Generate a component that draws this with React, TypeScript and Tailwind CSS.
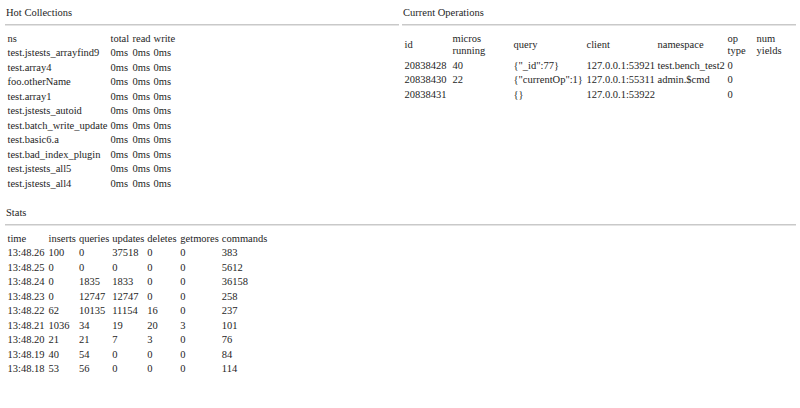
import React from "react";

const cell = "px-[1.5px] py-[1px] text-left font-normal align-middle whitespace-nowrap";
const cellWrap = "px-[1.5px] py-[1px] text-left font-normal align-middle";

function Title({ children }: { children: React.ReactNode }) {
  return (
    <div>
      <div className="leading-[12.5px] pl-[1px]">{children}</div>
      <div className="mt-[4.5px] h-[2px] border-t border-t-[#c9c9c9] border-b border-b-[#e4e4e4]" />
    </div>
  );
}

const hot = [
  "test.jstests_arrayfind9",
  "test.array4",
  "foo.otherName",
  "test.array1",
  "test.jstests_autoid",
  "test.batch_write_update",
  "test.basic6.a",
  "test.bad_index_plugin",
  "test.jstests_all5",
  "test.jstests_all4",
];

const ops = [
  ["20838428", "40", '{"_id":77}', "127.0.0.1:53921", "test.bench_test2", "0", ""],
  ["20838430", "22", '{"currentOp":1}', "127.0.0.1:55311", "admin.$cmd", "0", ""],
  ["20838431", "", "{}", "127.0.0.1:53922", "", "0", ""],
];

const stats = [
  ["13:48.26", "100", "0", "37518", "0", "0", "383"],
  ["13:48.25", "0", "0", "0", "0", "0", "5612"],
  ["13:48.24", "0", "1835", "1833", "0", "0", "36158"],
  ["13:48.23", "0", "12747", "12747", "0", "0", "258"],
  ["13:48.22", "62", "10135", "11154", "16", "0", "237"],
  ["13:48.21", "1036", "34", "19", "20", "3", "101"],
  ["13:48.20", "21", "21", "7", "3", "0", "76"],
  ["13:48.19", "40", "54", "0", "0", "0", "84"],
  ["13:48.18", "53", "56", "0", "0", "0", "114"],
];

export default function App() {
  return (
    <div
      className="w-[800px] h-[408px] bg-white text-[#1e1e1e] text-[10.5px] leading-[12.5px] pl-[5px] pr-[4px] pt-[7px]"
      style={{ fontFamily: '"Liberation Serif", "Times New Roman", serif' }}
    >
      <div className="grid grid-cols-2 gap-x-[3px]">
        <div>
          <Title>Hot Collections</Title>
          <table className="mt-[5.5px] ml-[1px] border-collapse">
            <thead>
              <tr>
                <th className={`${cell} w-[103px]`}>ns</th>
                <th className={`${cell} w-[22px]`}>total</th>
                <th className={`${cell} w-[21px]`}>read</th>
                <th className={cell}>write</th>
              </tr>
            </thead>
            <tbody>
              {hot.map((n) => (
                <tr key={n}>
                  <td className={cell}>{n}</td>
                  <td className={cell}>0ms</td>
                  <td className={cell}>0ms</td>
                  <td className={cell}>0ms</td>
                </tr>
              ))}
            </tbody>
          </table>
        </div>
        <div>
          <Title>Current Operations</Title>
          <table className="mt-[5.5px] ml-[1px] border-collapse table-fixed w-[393px]">
            <colgroup>
              <col className="w-[48px]" />
              <col className="w-[61px]" />
              <col className="w-[73px]" />
              <col className="w-[71px]" />
              <col className="w-[70px]" />
              <col className="w-[29px]" />
              <col />
            </colgroup>
            <thead>
              <tr>
                <th className={cellWrap}>id</th>
                <th className={cellWrap}>
                  micros
                  <br />
                  running
                </th>
                <th className={cellWrap}>query</th>
                <th className={cellWrap}>client</th>
                <th className={cellWrap}>namespace</th>
                <th className={cellWrap}>
                  op
                  <br />
                  type
                </th>
                <th className={cellWrap}>
                  num
                  <br />
                  yields
                </th>
              </tr>
            </thead>
            <tbody>
              {ops.map((r) => (
                <tr key={r[0]}>
                  {r.map((v, i) => (
                    <td key={i} className={cell}>
                      {v}
                    </td>
                  ))}
                </tr>
              ))}
            </tbody>
          </table>
        </div>
      </div>
      <div className="mt-[16px]">
        <Title>Stats</Title>
        <table className="mt-[5.5px] ml-[1px] border-collapse">
          <thead>
            <tr>
              <th className={`${cell} w-[41px]`}>time</th>
              <th className={`${cell} w-[30px]`}>inserts</th>
              <th className={`${cell} w-[33px]`}>queries</th>
              <th className={`${cell} w-[34px]`}>updates</th>
              <th className={`${cell} w-[33px]`}>deletes</th>
              <th className={`${cell} w-[38px]`}>getmores</th>
              <th className={cell}>commands</th>
            </tr>
          </thead>
          <tbody>
            {stats.map((r) => (
              <tr key={r[0]}>
                {r.map((v, i) => (
                  <td key={i} className={cell}>
                    {v}
                  </td>
                ))}
              </tr>
            ))}
          </tbody>
        </table>
      </div>
    </div>
  );
}
